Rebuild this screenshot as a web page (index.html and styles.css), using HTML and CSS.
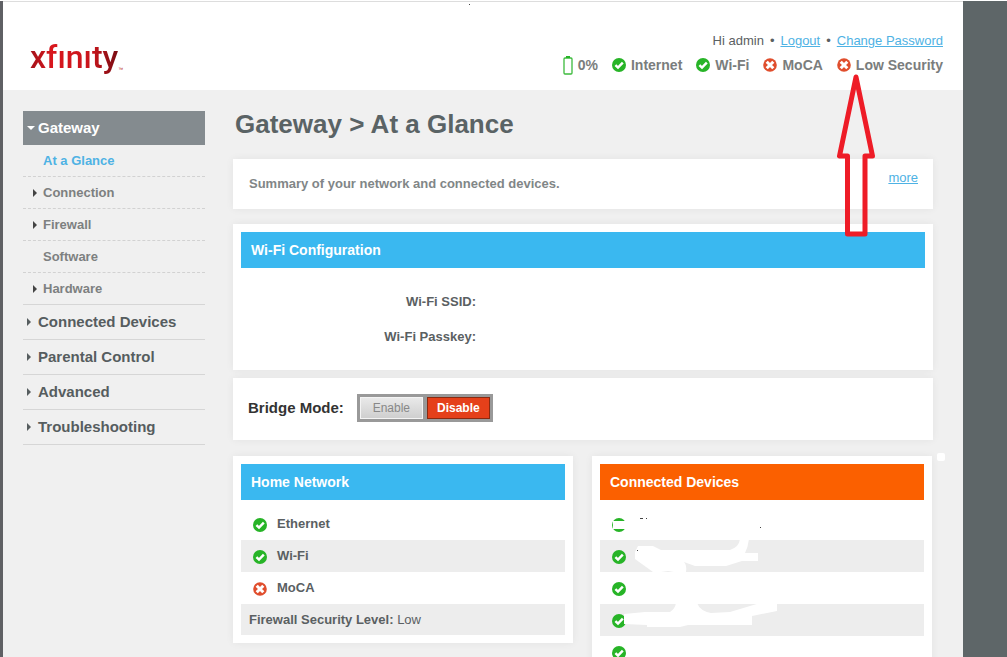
FILE: index.html
```html
<!DOCTYPE html>
<html lang="en">
<head>
<meta charset="utf-8">
<meta name="viewport" content="width=device-width, initial-scale=1">
<title>XFINITY Gateway</title>
<link rel="stylesheet" href="styles.css">
</head>
<body>
<svg width="0" height="0" class="defs" aria-hidden="true">
  <symbol id="ok" viewBox="0 0 14 14"><circle cx="7" cy="7" r="7" fill="#27b427"/><path d="M3.4 7.2 L6 9.6 L10.8 4.7" fill="none" stroke="#fff" stroke-width="2.5"/></symbol>
  <symbol id="bad" viewBox="0 0 14 14"><circle cx="7" cy="7" r="6.8" fill="#e04e2d"/><path d="M3.700 3.700 L10.300 10.300 M10.300 3.700 L3.700 10.300" fill="none" stroke="#fff" stroke-width="3"/></symbol>
</svg>
<div class="page">
  <header class="header">
    <a class="logo" href="#" aria-label="xfinity"><span class="logo-word">xfınıty</span><span class="logo-tm">™</span></a>
    <div class="user">
      <div class="session"><span>Hi admin</span><span>•</span><a href="#">Logout</a><span>•</span><a href="#">Change Password</a></div>
      <ul class="status">
        <li class="battery"><svg width="10" height="19" viewBox="0 0 10 19"><rect x="1" y="2" width="8" height="16" rx="1" fill="none" stroke="#3cba3c" stroke-width="1.3"/><rect x="3" y="0" width="4" height="2" fill="#27b427"/></svg>0%</li>
        <li><svg class="icon"><use href="#ok"/></svg>Internet</li>
        <li><svg class="icon"><use href="#ok"/></svg>Wi-Fi</li>
        <li><svg class="icon"><use href="#bad"/></svg>MoCA</li>
        <li class="security"><svg class="icon"><use href="#bad"/></svg>Low Security
          <svg class="arrow" width="38" height="164" viewBox="0 0 38 164"><path d="M19 3 L2.500 82 H10.500 V160 H28 V82 H35.500 Z" fill="none" stroke="#ee1c27" stroke-width="5" stroke-linejoin="round"/></svg>
        </li>
      </ul>
    </div>
    <i class="dot"></i>
  </header>
  <div class="body">
    <nav class="nav">
      <a class="top open" href="#">Gateway</a>
      <ul class="sub">
        <li><a class="current" href="#">At a Glance</a></li>
        <li><a class="more-items" href="#">Connection</a></li>
        <li><a class="more-items" href="#">Firewall</a></li>
        <li><a href="#">Software</a></li>
        <li><a class="more-items" href="#">Hardware</a></li>
      </ul>
      <a class="top" href="#">Connected Devices</a>
      <a class="top" href="#">Parental Control</a>
      <a class="top" href="#">Advanced</a>
      <a class="top" href="#">Troubleshooting</a>
    </nav>
    <main class="main">
      <h1>Gateway &gt; At a Glance</h1>
      <section class="card summary">
        <p>Summary of your network and connected devices.</p>
        <a href="#">more</a>
      </section>
      <section class="card wifi">
        <h2>Wi-Fi Configuration</h2>
        <dl><dt>Wi-Fi SSID:</dt><dd></dd><dt>Wi-Fi Passkey:</dt><dd></dd></dl>
      </section>
      <section class="card bridge">
        <span class="bridge-label" id="bridge">Bridge Mode:</span>
        <div class="toggle" role="group" aria-labelledby="bridge">
          <button type="button">Enable</button>
          <button type="button" class="on" aria-pressed="true">Disable</button>
        </div>
      </section>
      <div class="pair">
        <section class="card home">
          <h2>Home Network</h2>
          <ul class="rows">
            <li><svg class="icon"><use href="#ok"/></svg><b>Ethernet</b></li>
            <li><svg class="icon"><use href="#ok"/></svg><b>Wi-Fi</b></li>
            <li><svg class="icon"><use href="#bad"/></svg><b>MoCA</b></li>
            <li><p><b>Firewall Security Level:</b> Low</p></li>
          </ul>
        </section>
        <section class="card devices">
          <h2>Connected Devices</h2>
          <ul class="rows">
            <li><svg class="icon"><use href="#ok"/></svg></li>
            <li><svg class="icon"><use href="#ok"/></svg></li>
            <li><svg class="icon"><use href="#ok"/></svg></li>
            <li><svg class="icon"><use href="#ok"/></svg></li>
            <li><svg class="icon"><use href="#ok"/></svg></li>
          </ul>
          <svg class="smudge" width="200" height="152" viewBox="0 0 200 152">
            <g fill="#fff">
              <rect x="13" y="16" width="13" height="8"/>
              <path d="M35 47 L38 41 L53 41 L61 45 H130 Q139 42 140 34 H149 Q148 42 145 48 H158 V56 H142 L126 61 H95 L84 57 Q87 60 86 67 H74 L68 66 L61 67 H53 L35 54 Z"/>
              <path d="M24 109 L45 107 H70 Q75 104 76 98 H97 Q100 106 111 108 L130 107 L160 98 H177 V106 L152 111 V120 H88 L80 122 H47 V120 L24 119 Z"/>
            </g>
            <path d="M40 13.500 H43 M46 13.500 H47 M160 22.500 H161 M37 45.500 H38" stroke="#444" fill="none"/>
          </svg>
          <i class="speck"></i>
        </section>
      </div>
    </main>
  </div>
</div>
</body>
</html>
```
FILE: styles.css
```css
* { box-sizing: border-box; }
html { overflow-x: hidden; }
body {
  margin: 0;
  height: 100vh;
  overflow: hidden;
  background: #5e6668;
  border-top: 1px solid #fff;
  font-family: "Liberation Sans", Arial, sans-serif;
  font-size: 13px;
  line-height: 16px;
  color: #5a6062;
}
ul, dl, dd, p, h1, h2 { margin: 0; padding: 0; list-style: none; }
a { color: #4eb2e4; }
.defs { position: absolute; }
.icon { width: 14px; height: 14px; flex: none; }
.page {
  max-width: 963px;
  min-height: 100vh;
  background: #f0f0f0;
  border-left: 3px solid #5f6064;
}
.header {
  position: relative;
  display: flex;
  justify-content: space-between;
  align-items: flex-start;
  height: 89px;
  padding: 31px 20px 0 27px;
  background: #fff;
  border-top: 1px solid #ddd;
}
.dot { position: absolute; left: 466px; top: 2px; width: 1px; height: 1px; background: #444; }
.logo { display: flex; align-items: flex-end; text-decoration: none; color: #b3141b; }
.logo-word {
  font: 500 32px/48px Roboto, sans-serif;
  background: linear-gradient(90deg, #a3121a, #d9161d 25%, #c9151c 70%, #780c12);
  -webkit-background-clip: text;
  background-clip: text;
  color: transparent;
}
.logo-tm { font-size: 5px; line-height: 24px; }
.user { display: flex; flex-direction: column; align-items: flex-end; gap: 7px; }
.session { display: flex; gap: 6px; }
.status { display: flex; gap: 14px; font-size: 14px; font-weight: 700; color: #7a7d7d; }
.status li { display: flex; align-items: center; gap: 5px; height: 18px; }
.status .security { position: relative; }
.arrow { position: absolute; left: 0; top: 18px; }
.body {
  display: grid;
  grid-template-columns: 182px minmax(0, 1fr);
  gap: 28px;
  padding: 21px 30px 0 20px;
}
.nav a { display: flex; align-items: center; text-decoration: none; font-weight: 700; }
.nav .top {
  height: 35px;
  gap: 6px;
  padding-left: 4px;
  border-bottom: 1px solid #d6d6d6;
  font-size: 15px;
  color: #565d5f;
}
.nav .top::before, .more-items::before {
  content: "";
  border: 4px solid transparent;
  border-left-color: currentColor;
  border-right-width: 0;
}
.nav .top::before { margin-right: 1px; }
.nav .open { height: 34px; border: 0; background: #848b8f; color: #fff; gap: 3px; }
.nav .open::before {
  border: 4px solid transparent;
  border-top-color: #fff;
  border-bottom-width: 0;
  margin: 0;
}
.sub li { height: 32px; border-bottom: 1px dashed #d2d2d2; }
.sub li:last-child { border-bottom: 1px solid #d6d6d6; }
.sub a { height: 31px; padding-left: 20px; color: #7d8080; }
.sub .current { color: #4eb2e4; }
.sub .more-items { padding-left: 10px; gap: 6px; }
.sub .more-items::before { color: #444; }
h1 { padding: 0 0 22px 2px; font-size: 26px; line-height: 26px; color: #5a6365; }
.card {
  padding: 8px;
  background: #fff;
  box-shadow: 0 0 8px rgba(0, 0, 0, .06);
}
h2 {
  padding: 0 10px;
  background: #3ab8f0;
  color: #fff;
  font-size: 14px;
  line-height: 36px;
}
.summary {
  display: flex;
  justify-content: space-between;
  padding: 10px 15px 16px 16px;
  margin-bottom: 15px;
}
.summary p { padding-top: 6px; font-weight: 700; line-height: 18px; color: #818687; }
.summary a { line-height: 18px; }
.wifi { margin-bottom: 8px; }
.wifi dl {
  display: grid;
  grid-template-columns: 235px 1fr;
  padding: 16px 0 8px;
  text-align: right;
  font-weight: 700;
  line-height: 35px;
}
.bridge {
  display: flex;
  align-items: center;
  gap: 13px;
  padding: 16px 15px 18px;
  margin-bottom: 16px;
}
.bridge-label { font-size: 15px; font-weight: 700; color: #333; }
.toggle { display: flex; gap: 4px; padding: 3px; background: #999; }
.toggle button {
  width: 63px;
  height: 22px;
  padding: 0;
  border: 1px solid #f4f4f4;
  background: linear-gradient(#e9e9e9, #cfcfcf);
  color: #888;
  font: 12px/18px "Liberation Sans", Arial, sans-serif;
}
.toggle .on { border-color: #8a2a10; background: #e5401a; color: #fff; font-weight: 700; }
.pair {
  display: grid;
  grid-template-columns: 1fr 1fr;
  align-items: start;
  gap: 19px;
  padding-right: 1px;
}
.rows { padding-top: 8px; }
.rows li { display: flex; align-items: center; gap: 10px; height: 32px; padding: 0 8px 0 12px; }
.rows li:nth-child(even) { background: #ededed; }
.rows p { margin-left: -4px; }
.home li:last-child { height: 31px; }
.rows .icon { margin-top: 1px; }
.devices { position: relative; }
.devices h2 { background: #fb6000; }
.smudge { position: absolute; left: 8px; top: 49px; }
.speck { position: absolute; right: -13px; top: -3px; width: 8px; height: 8px; border-radius: 2px; background: #fff; }
```
